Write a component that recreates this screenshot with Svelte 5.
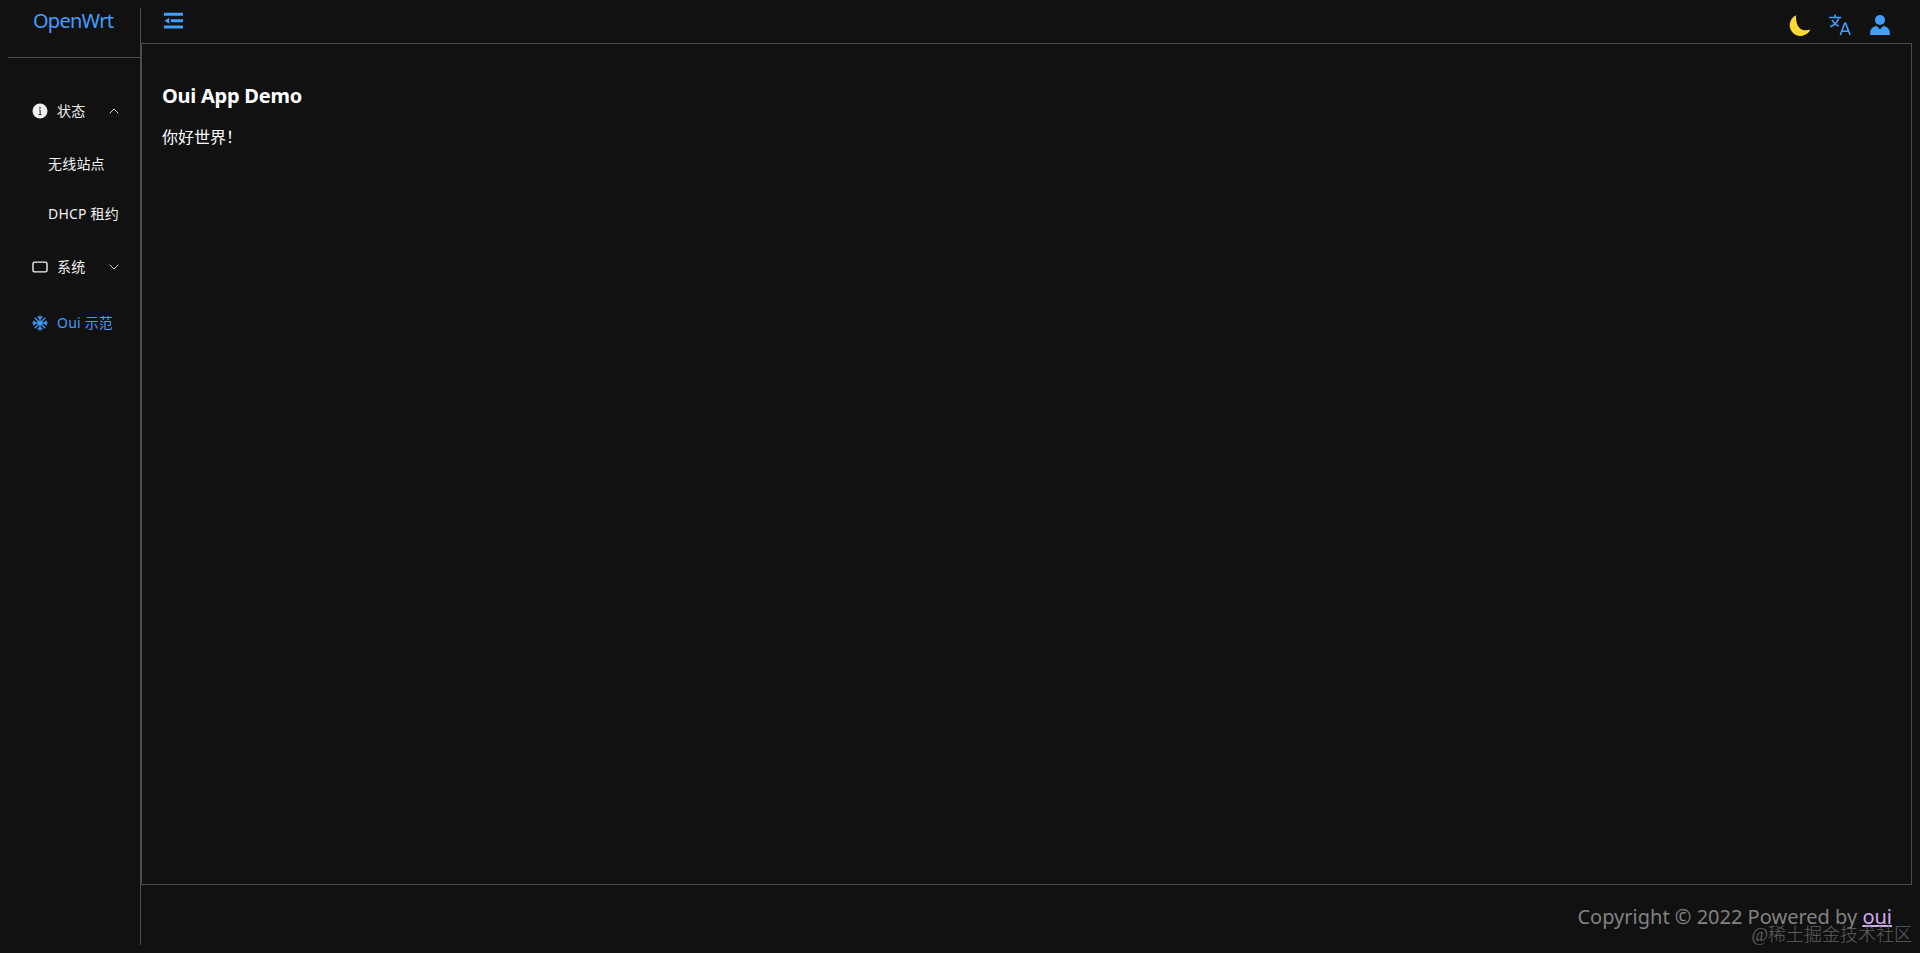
<script>
  let collapsed = $state({ status: false, system: true });
  let active = $state('oui');

  const menu = [
    {
      key: 'status',
      label: '状态',
      icon: 'info',
      children: [
        { key: 'stations', label: '无线站点' },
        { key: 'dhcp', label: 'DHCP 租约' }
      ]
    },
    { key: 'system', label: '系统', icon: 'rect', children: [] },
    { key: 'oui', label: 'Oui 示范', icon: 'snow' }
  ];

  function select(item) {
    if (item.children) collapsed[item.key] = !collapsed[item.key];
    else active = item.key;
  }
</script>

<div class="layout">
  <aside class="sider">
    <div class="logo"><span>OpenWrt</span></div>
    <nav class="menu">
      {#each menu as item}
        <button class="item" class:active={active === item.key} onclick={() => select(item)}>
          <svg class="icon" viewBox="0 0 16 16">
            {#if item.icon === 'info'}
              <circle cx="8" cy="8" r="7.5" fill="currentColor" />
              <path d="M7 7.1h1.2v4.4M6.6 11.6h3" fill="none" stroke="#333" stroke-width="1" />
              <circle cx="8" cy="4.8" r=".9" fill="#333" />
            {:else if item.icon === 'rect'}
              <rect x="1" y="3.1" width="14" height="9.8" rx="1.7" fill="none" stroke="currentColor" stroke-width="1.4" />
            {:else}
              <g fill="none" stroke="currentColor" stroke-width="1.3">
                <path d="M8 .4v15.2M.4 8h15.2M2.7 2.7l10.6 10.6M13.3 2.7 2.7 13.3" />
                {#each [0, 90, 180, 270] as angle}
                  <path d="M5.7 1.4 8 3.5l2.3-2.1" transform="rotate({angle} 8 8)" />
                {/each}
              </g>
            {/if}
          </svg>
          <span class="label">{item.label}</span>
          {#if item.children}
            <svg class="arrow" class:down={collapsed[item.key]} viewBox="0 0 10 6">
              <path d="M.7 5.3 5 1l4.3 4.3" fill="none" stroke="currentColor" stroke-width=".9" />
            </svg>
          {/if}
        </button>
        {#if item.children && !collapsed[item.key]}
          {#each item.children as child}
            <button class="sub" class:active={active === child.key} onclick={() => select(child)}>
              <span class="label">{child.label}</span>
            </button>
          {/each}
        {/if}
      {/each}
    </nav>
  </aside>

  <div class="body">
    <header>
      <svg class="fold" viewBox="0 0 20 18">
        <path d="M0 .8h19v3H0zM7 7.2h12v3H7zM0 13.6h19v3H0zM.5 8.7 5.3 5.7v6z" fill="currentColor" />
      </svg>
      <div class="tools">
        <svg class="moon" viewBox="0 0 22 22">
          <path d="M7.3.2A10.8 10.8 0 1 0 21.4 14.5C15.5 16.6 9.8 14.4 8 8.7 7 5.5 6.7 2.4 7.3.2z" fill="currentColor" />
        </svg>
        <svg viewBox="0 0 22 22">
          <path d="M.2 3.5h12M6.2.6v2.9M9.8 3.6c-1 4.7-4.4 7.5-8.6 9.2M3 6.1c1.4 2.7 4 5 6.7 6.3M11.3 21l4.4-11.6h1L21.1 21M12.8 17.3h7" fill="none" stroke="currentColor" stroke-width="1.6" />
        </svg>
        <svg viewBox="0 0 22 22">
          <circle cx="11" cy="6" r="5" fill="currentColor" />
          <path d="M1.2 21v-2.2c0-3.8 2.3-6.2 6.4-6.8l3.4 3.2 3.4-3.2c4.1.6 6.4 3 6.4 6.8V21z" fill="currentColor" />
        </svg>
      </div>
    </header>
    <main>
      <h2>Oui App Demo</h2>
      <p>你好世界！</p>
    </main>
    <footer>
      <span>Copyright © 2022 Powered by <a href="#oui">oui</a></span>
    </footer>
  </div>
  <div class="watermark">@稀土掘金技术社区</div>
</div>

<style>
  :global(body) {
    background: #111;
  }
  .layout {
    position: relative;
    display: flex;
    box-sizing: border-box;
    height: 953px;
    padding: 8px;
    color: #fff;
    font-family: "Noto Sans", "Noto Sans CJK SC", sans-serif;
    font-size: 16px;
  }
  .sider {
    box-sizing: border-box;
    width: 133px;
    flex: none;
    border-right: 1px solid #4c4c4f;
  }
  .logo {
    box-sizing: border-box;
    height: 50px;
    border-bottom: 1px solid #4c4c4f;
    padding-left: 25px;
    color: #409eff;
    font-size: 20px;
    line-height: 26px;
    letter-spacing: -0.75px;
    white-space: nowrap;
  }
  .menu {
    padding-top: 25px;
  }
  button {
    display: flex;
    align-items: center;
    box-sizing: border-box;
    width: 132px;
    margin: 0;
    border: 0;
    background: none;
    color: #f0f0f0;
    font: inherit;
    font-size: 14px;
    letter-spacing: 0.2px;
    white-space: nowrap;
    cursor: pointer;
  }
  .item {
    height: 56px;
    padding: 0 21px 0 24px;
  }
  .sub {
    height: 50px;
    padding: 0 0 0 40px;
  }
  .label {
    padding-bottom: 2px;
  }
  .active {
    color: #409eff;
  }
  .icon {
    width: 16px;
    height: 16px;
    margin-right: 9px;
  }
  .arrow {
    width: 10px;
    height: 6px;
    margin-left: auto;
  }
  .arrow.down {
    transform: rotate(180deg);
  }
  .body {
    display: flex;
    flex: 1;
    flex-direction: column;
  }
  header {
    display: flex;
    justify-content: space-between;
    height: 35px;
    padding: 0 21px 0 23px;
    color: #409eff;
  }
  .fold {
    width: 20px;
    height: 18px;
    margin-top: 4px;
  }
  .tools {
    display: flex;
    gap: 18px;
    padding-top: 6px;
  }
  .tools svg {
    width: 22px;
    height: 22px;
  }
  .tools .moon {
    margin-top: 1px;
    color: #fdd835;
  }
  main {
    box-sizing: border-box;
    height: 842px;
    border: 1px solid #4c4c4f;
    padding: 36px 20px;
  }
  h2 {
    margin: 0;
    font-size: 20px;
    line-height: 32px;
    letter-spacing: -0.25px;
  }
  p {
    margin: 13px 0 0;
    line-height: 24px;
  }
  footer {
    display: flex;
    justify-content: flex-end;
    padding: 18px 20px 0 0;
    color: #828282;
    font-size: 20px;
    line-height: 28px;
  }
  a {
    color: #d0adf0;
    text-decoration: underline;
  }
  .watermark {
    position: absolute;
    right: 8px;
    bottom: 5px;
    color: #606060;
    font-family: "Liberation Serif", "Noto Sans CJK SC", serif;
    font-size: 18px;
    font-weight: 300;
    line-height: 26px;
  }
</style>
